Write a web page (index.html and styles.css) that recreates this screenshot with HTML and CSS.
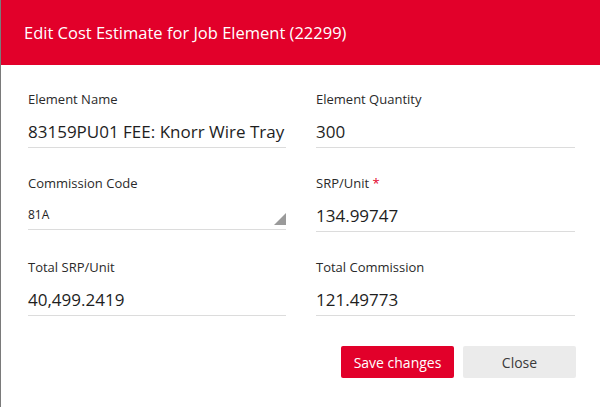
FILE: index.html
```html
<!DOCTYPE html>
<html>
<head>
<meta charset="utf-8">
<link rel="stylesheet" href="styles.css">
</head>
<body>
<div class="dialog">
  <div class="header">Edit Cost Estimate for Job Element (22299)</div>
  <div class="content">
    <div class="grid">
      <div class="field">
        <div class="label">Element Name</div>
        <div class="value">83159PU01 FEE: Knorr Wire Tray</div>
      </div>
      <div class="field">
        <div class="label">Element Quantity</div>
        <div class="value">300</div>
      </div>
      <div class="field">
        <div class="label">Commission Code</div>
        <div class="value select"><span>81A</span><span class="tri"></span></div>
      </div>
      <div class="field">
        <div class="label">SRP/Unit <span class="req">*</span></div>
        <div class="value">134.99747</div>
      </div>
      <div class="field">
        <div class="label">Total SRP/Unit</div>
        <div class="value">40,499.2419</div>
      </div>
      <div class="field">
        <div class="label">Total Commission</div>
        <div class="value">121.49773</div>
      </div>
    </div>
    <div class="actions">
      <button class="btn primary">Save changes</button>
      <button class="btn secondary">Close</button>
    </div>
  </div>
</div>
</body>
</html>
```
FILE: styles.css
```css
html, body {
  margin: 0;
  padding: 0;
  background: #fff;
}
body {
  font-family: "Open Sans", "Liberation Sans", sans-serif;
  width: 600px;
  height: 407px;
  overflow: hidden;
}
.dialog {
  height: 407px;
  border-left: 1px solid #7a7a7a;
  box-sizing: border-box;
}
.header {
  background: #e2002a;
  color: #fff;
  height: 65px;
  box-sizing: border-box;
  padding-left: 23px;
  font-size: 16.5px;
  line-height: 65px;
}
.content {
  padding: 25px 24px 0 27px;
}
.grid {
  display: grid;
  grid-template-columns: 258px 259px;
  column-gap: 30px;
  row-gap: 26px;
}
.field {
  display: flex;
  flex-direction: column;
}
.label {
  font-size: 13px;
  line-height: 18px;
  color: #2a2a2a;
}
.req {
  color: #e2002a;
}
.value {
  margin-top: 12px;
  font-size: 17px;
  line-height: 24px;
  height: 24px;
  color: #1e1e1e;
  padding-bottom: 3px;
  border-bottom: 1px solid #dcdcdc;
  white-space: nowrap;
}
.select {
  font-size: 12px;
  display: flex;
  justify-content: space-between;
  align-items: center;
  height: 23px;
  padding-bottom: 2px;
}
.select span:first-child {
  position: relative;
  top: -1px;
}
.tri {
  width: 0;
  height: 0;
  border-left: 12px solid transparent;
  border-bottom: 12px solid #9a9a9a;
  margin-top: 6px;
}
.actions {
  display: flex;
  justify-content: flex-end;
  gap: 9px;
  margin-top: 30px;
}
.btn {
  width: 113px;
  height: 32px;
  border: none;
  border-radius: 2px;
  font-family: "Open Sans", "Liberation Sans", sans-serif;
  font-size: 14px;
  padding: 0;
}
.primary {
  background: #e2002a;
  color: #fff;
}
.secondary {
  background: #ebebeb;
  color: #3a3a3a;
}
```
